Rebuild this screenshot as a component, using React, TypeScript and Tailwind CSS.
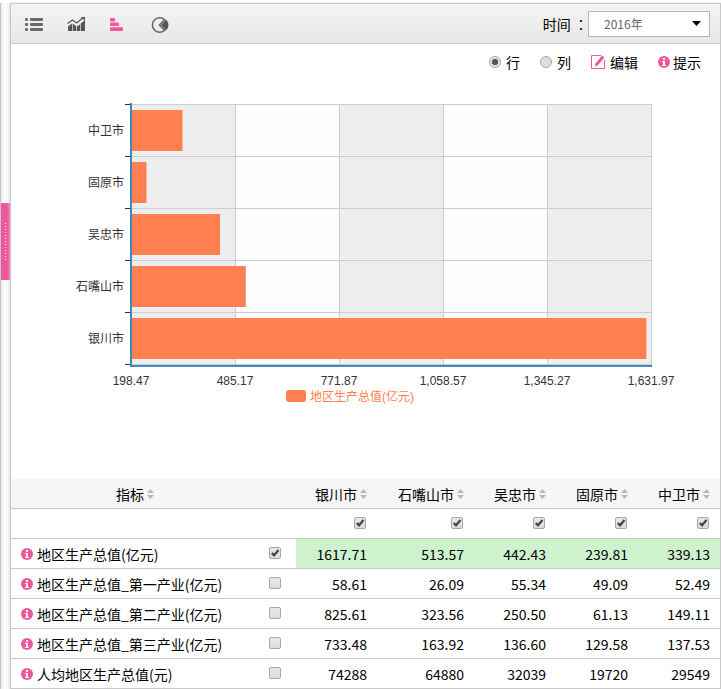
import { useState } from "react";

interface ICity {
  id: string;
  name: string;
  width: string;
}

interface IIndicator {
  id: string;
  name: string;
  values: string[];
}

const cities: ICity[] = [
  { id: "yinchuan", name: "银川市", width: "w-[81px]" },
  { id: "shizuishan", name: "石嘴山市", width: "w-[97px]" },
  { id: "wuzhong", name: "吴忠市", width: "w-[82px]" },
  { id: "guyuan", name: "固原市", width: "w-[82px]" },
  { id: "zhongwei", name: "中卫市", width: "w-[82px]" },
];

const indicators: IIndicator[] = [
  {
    id: "gdp",
    name: "地区生产总值(亿元)",
    values: ["1617.71", "513.57", "442.43", "239.81", "339.13"],
  },
  {
    id: "gdp1",
    name: "地区生产总值_第一产业(亿元)",
    values: ["58.61", "26.09", "55.34", "49.09", "52.49"],
  },
  {
    id: "gdp2",
    name: "地区生产总值_第二产业(亿元)",
    values: ["825.61", "323.56", "250.50", "61.13", "149.11"],
  },
  {
    id: "gdp3",
    name: "地区生产总值_第三产业(亿元)",
    values: ["733.48", "163.92", "136.60", "129.58", "137.53"],
  },
  {
    id: "perCapita",
    name: "人均地区生产总值(元)",
    values: ["74288", "64880", "32039", "19720", "29549"],
  },
];

const ticks = ["198.47", "485.17", "771.87", "1,058.57", "1,345.27", "1,631.97"];

const InfoIcon = () => (
  <svg className="size-3 shrink-0" viewBox="0 0 12 12" aria-hidden="true">
    <circle cx="6" cy="6" r="6" fill="#f0569a" />
    <path d="M5 2h2v2H5zM4 5h3v4h1v1H4V9h1V6H4z" fill="#fff" />
  </svg>
);

const SortIcon = () => (
  <svg className="h-[10px] w-[7px] shrink-0" viewBox="0 0 7 10" aria-hidden="true">
    <path d="M0 4 3.5 0 7 4zM0 6h7L3.5 10z" fill="#b8b8b8" />
  </svg>
);

const Toolbar = () => {
  return (
    <header className="flex h-10 items-center justify-between border-b border-[#c8c8c8] bg-linear-to-b from-[#f4f4f4] to-[#e8e8e8] pr-2.5 pl-3.5">
      <nav className="flex gap-6 pt-0.5">
        <button type="button" aria-label="列表">
          <svg className="size-[18px]" viewBox="0 0 18 18" fill="#6a6a6a">
            <rect x="0" y="2" width="3" height="3" rx="1" />
            <rect x="5" y="2" width="13" height="3" rx="1" />
            <rect x="0" y="7" width="3" height="3" rx="1" />
            <rect x="5" y="7" width="13" height="3" rx="1" />
            <rect x="0" y="12" width="3" height="3" rx="1" />
            <rect x="5" y="12" width="13" height="3" rx="1" />
          </svg>
        </button>
        <button type="button" aria-label="趋势图">
          <svg className="size-[18px]" viewBox="0 0 18 18" fill="#555">
            <path d="M1 10.5 5 7.5V15H1zM5.7 7.5 9 10V15H5.7zM9.7 10.5 13 8.5V15H9.7zM13.7 7.5 18 4v11h-4.300z" />
            <path d="M.5 7.500 5.500 4l4 3 6.500-5" fill="none" stroke="#555" strokeWidth="1.2" />
            <path d="M13.500 1H18v3.500z" />
          </svg>
        </button>
        <button type="button" aria-label="条形图">
          <svg className="size-[18px]" viewBox="0 0 18 18" fill="#f0569a">
            <rect x="1" y="2" width="5" height="3.500" rx="1" />
            <rect x="1" y="6.500" width="9" height="3.500" rx="1" />
            <rect x="1" y="11.300" width="13" height="3.700" rx="1" />
          </svg>
        </button>
        <button type="button" aria-label="饼图">
          <svg className="size-[18px]" viewBox="0 0 18 18">
            <path
              d="M13.500 3.500A7.300 7.300 0 1 0 13.500 14.500L8.500 9z"
              fill="none"
              stroke="#666"
              strokeWidth="1.500"
            />
            <path d="M10 9l5-5.500a7.300 7.300 0 0 1 0 11z" fill="#555" />
          </svg>
        </button>
      </nav>

      <div className="flex items-center">
        <label htmlFor="year" className="font-['Noto_Sans_CJK_TC',sans-serif] text-sm">
          时间 ：
        </label>
        <div className="grid h-[26px] w-[122px] items-center border border-[#b5b5b5] bg-white">
          <select
            id="year"
            defaultValue="2016"
            className="col-start-1 row-start-1 h-6 w-full appearance-none pl-[15px] text-xs text-[#666]"
          >
            <option value="2016">2016年</option>
          </select>
          <svg
            className="pointer-events-none col-start-1 row-start-1 mr-2 h-[5px] w-[9px] justify-self-end"
            viewBox="0 0 9 5"
            aria-hidden="true"
          >
            <path d="M0 0h9L4.500 5z" />
          </svg>
        </div>
      </div>
    </header>
  );
};

interface IRadio {
  label: string;
  value: string;
  checked?: boolean;
}

const Radio: React.FC<IRadio> = ({ label, value, checked }) => (
  <label className="flex items-center gap-[5px]">
    <input
      type="radio"
      name="direction"
      value={value}
      defaultChecked={checked}
      className="size-3 appearance-none rounded-full border border-[#a8a8a8] bg-[#dedede] checked:bg-radial checked:from-[#555] checked:from-40% checked:to-[#e4e4e4] checked:to-50%"
    />
    {label}
  </label>
);

const Options = () => {
  return (
    <div className="flex h-9 items-center justify-end gap-5 pr-[19px] text-sm">
      <Radio label="行" value="row" checked />
      <Radio label="列" value="column" />
      <button type="button" className="flex items-center gap-[5px]">
        <svg className="size-3.5" viewBox="0 0 14 14" fill="none" aria-hidden="true">
          <path d="M10 .5H.5v13h13V5" stroke="#f0569a" />
          <path d="M4.500 8.500 11 .5 13.500 2.500 7 10l-3 1.500z" fill="#f0569a" />
        </svg>
        编辑
      </button>
      <button type="button" className="flex items-center gap-[3px]">
        <InfoIcon />
        提示
      </button>
    </div>
  );
};

const BarChart = () => {
  // bars run bottom to top, in the order of the table's columns
  const bars = cities.map((city, i) => ({
    ...city,
    y: 238 - i * 52,
    width: ((Number(indicators[0].values[i]) - 198.47) / 286.7) * 104,
  }));

  return (
    <svg className="block h-auto w-full" viewBox="0 0 709 399" role="img" aria-label="地区生产总值(亿元)">
      {[0, 1, 2, 3, 4].map((i) => (
        <rect
          key={i}
          x={120 + i * 104}
          y="24"
          width="104"
          height="261"
          fill={i % 2 === 0 ? "#eee" : "#fdfdfd"}
        />
      ))}
      {[0, 1, 2, 3, 4, 5].map((i) => (
        <g key={i}>
          <path d={`M120 ${24.5 + i * 52}H641`} stroke="#ccc" />
          <path d={`M${120.5 + i * 104} 24V285`} stroke="#ccc" />
          <path d={`M114 ${24.5 + i * 52}h6`} stroke="#333" />
        </g>
      ))}
      {bars.map((bar) => (
        <rect key={bar.id} x="120.5" y={bar.y} width={bar.width} height="41" fill="#ff7f50" />
      ))}
      <path d="M120 23V286H641" fill="none" stroke="#4488bb" strokeWidth="2" />
      <g fontSize="12" fill="#333" className="font-['Liberation_Sans','Noto_Sans_CJK_SC',sans-serif]">
        {bars.map((bar) => (
          <text key={bar.id} x="113" y={bar.y + 25} textAnchor="end">
            {bar.name}
          </text>
        ))}
        {ticks.map((tick, i) => (
          <text key={tick} x={120 + i * 104} y="305" textAnchor="middle">
            {tick}
          </text>
        ))}
        <rect x="275" y="310" width="20" height="12" rx="3" fill="#ff7f50" />
        <text x="299" y="321" fill="#ff7f50">
          地区生产总值(亿元)
        </text>
      </g>
    </svg>
  );
};

interface ICheckbox {
  label: string;
  checked: boolean;
  onChange: () => void;
}

const Checkbox: React.FC<ICheckbox> = ({ label, checked, onChange }) => (
  <span className="inline-grid place-items-center pb-0.5 align-top">
    <input
      type="checkbox"
      aria-label={label}
      checked={checked}
      onChange={onChange}
      className="col-start-1 row-start-1 size-3 appearance-none rounded-xs border border-[#a8a8a8] bg-linear-to-b from-[#e8e8e8] to-[#dcdcdc]"
    />
    {checked && (
      <svg
        className="pointer-events-none col-start-1 row-start-1 size-3"
        viewBox="0 0 12 12"
        fill="none"
        aria-hidden="true"
      >
        <path d="M2.800 6 5 8.300 9.500 3" stroke="#444" strokeWidth="2.200" />
      </svg>
    )}
  </span>
);

const DataTable = () => {
  const [checkedCities, setCheckedCities] = useState<string[]>(cities.map((c) => c.id));
  const [checkedRows, setCheckedRows] = useState<string[]>(["gdp"]);

  const toggle = (list: string[], id: string) =>
    list.includes(id) ? list.filter((item) => item !== id) : [...list, id];

  return (
    <table className="w-full table-fixed border-separate border-spacing-0 text-sm leading-5">
      <colgroup>
        <col />
        <col className="w-[37px]" />
        {cities.map((city) => (
          <col key={city.id} className={city.width} />
        ))}
      </colgroup>
      <thead>
        <tr className="h-[30px] bg-[#f5f5f5]">
          <th className="border-b border-[#c8c8c8] p-0 font-normal">
            <button type="button" className="inline-flex items-center gap-[3px] align-top">
              指标
              <SortIcon />
            </button>
          </th>
          <td className="border-b border-[#c8c8c8] p-0"></td>
          {cities.map((city) => (
            <th key={city.id} className="border-b border-[#c8c8c8] p-0 pr-2.5 text-right font-normal">
              <button type="button" className="inline-flex items-center gap-[3px] align-top">
                {city.name}
                <SortIcon />
              </button>
            </th>
          ))}
        </tr>
      </thead>
      <tbody>
        <tr className="h-[30px]">
          <td className="border-b border-[#c8c8c8] p-0"></td>
          <td className="border-b border-[#c8c8c8] p-0"></td>
          {cities.map((city) => (
            <td key={city.id} className="border-b border-[#c8c8c8] p-0 pr-[11px] text-right leading-3">
              <Checkbox
                label={city.name}
                checked={checkedCities.includes(city.id)}
                onChange={() => setCheckedCities(toggle(checkedCities, city.id))}
              />
            </td>
          ))}
        </tr>
        {indicators.map((row) => (
          <tr key={row.id} className="group h-[30px]">
            <th className="border-b border-[#c8c8c8] p-0 pl-2.5 text-left font-normal">
              <span className="flex items-center gap-1 whitespace-nowrap">
                <InfoIcon />
                {row.name}
              </span>
            </th>
            <td className="border-b border-[#c8c8c8] p-0 pl-2.5 leading-3">
              <Checkbox
                label={row.name}
                checked={checkedRows.includes(row.id)}
                onChange={() => setCheckedRows(toggle(checkedRows, row.id))}
              />
            </td>
            {row.values.map((value, i) => (
              <td
                key={cities[i].id}
                className="border-b border-[#c8c8c8] p-0 pr-2.5 text-right group-has-checked:bg-[#cef2ce]"
              >
                {value}
              </td>
            ))}
          </tr>
        ))}
      </tbody>
    </table>
  );
};

const App = () => {
  return (
    <div className="flex bg-white pt-[3px] font-['Noto_Sans_CJK_SC',sans-serif] text-black">
      <aside className="w-2.5 shrink-0 border-l border-[#c8c8c8] bg-linear-to-r from-[#eee] via-white to-[#f0f0f0]">
        <button
          type="button"
          aria-label="收起"
          className="mt-[200px] flex h-[77px] w-full items-center justify-center bg-[#f0569a]"
        >
          <svg className="h-[37px] w-px" viewBox="0 0 1 37" aria-hidden="true">
            <path d="M.5 0V37" stroke="#fff" strokeDasharray="1 2" />
          </svg>
        </button>
      </aside>
      <main className="min-w-0 flex-1 border border-b-0 border-[#c8c8c8] shadow-[0_0_3px_#ddd]">
        <Toolbar />
        <Options />
        <BarChart />
        <DataTable />
      </main>
    </div>
  );
};

export default App;
